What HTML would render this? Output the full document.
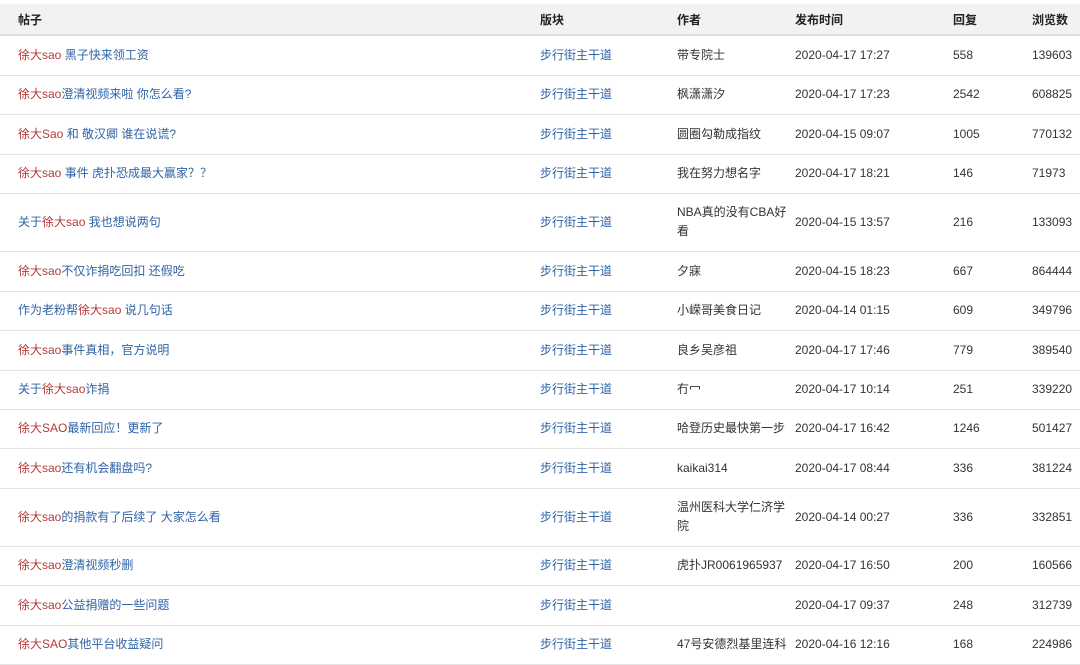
<!DOCTYPE html>
<html><head><meta charset="utf-8"><style>
body{margin:0;background:#fff;width:1080px;height:665px;overflow:hidden;font-family:"Liberation Sans","Noto Sans CJK SC",sans-serif;font-size:12px;color:#333}
table{border-collapse:collapse;position:absolute;top:4px;left:0;width:1080px;table-layout:fixed}
th{background:#f2f2f2;height:30px;text-align:left;font-weight:bold;color:#222;border-bottom:2px solid #ddd;padding:0;vertical-align:middle}
td{padding:0;border-bottom:1px solid #e4e4e4;line-height:19px;vertical-align:middle}
th:first-child,td:first-child{padding-left:18px}
.r{color:#b8383a}.b{color:#2f63a6}
</style></head><body>
<table>
<colgroup><col style="width:540px"><col style="width:137px"><col style="width:118px"><col style="width:158px"><col style="width:79px"><col></colgroup>
<tr><th>帖子</th><th>版块</th><th>作者</th><th>发布时间</th><th>回复</th><th>浏览数</th></tr>
<tr style="height:40px"><td><span class="r">徐大sao</span><span class="b"> 黑子快来领工资</span></td><td class="b">步行街主干道</td><td>带专院士</td><td>2020-04-17 17:27</td><td>558</td><td>139603</td></tr>
<tr style="height:39px"><td><span class="r">徐大sao</span><span class="b">澄清视频来啦 你怎么看?</span></td><td class="b">步行街主干道</td><td>枫潇潇汐</td><td>2020-04-17 17:23</td><td>2542</td><td>608825</td></tr>
<tr style="height:40px"><td><span class="r">徐大Sao</span><span class="b"> 和 敬汉卿 谁在说谎?</span></td><td class="b">步行街主干道</td><td>圆圈勾勒成指纹</td><td>2020-04-15 09:07</td><td>1005</td><td>770132</td></tr>
<tr style="height:39px"><td><span class="r">徐大sao</span><span class="b"> 事件 虎扑恐成最大赢家？？</span></td><td class="b">步行街主干道</td><td>我在努力想名字</td><td>2020-04-17 18:21</td><td>146</td><td>71973</td></tr>
<tr style="height:58px"><td><span class="b">关于</span><span class="r">徐大sao</span><span class="b"> 我也想说两句</span></td><td class="b">步行街主干道</td><td>NBA真的没有CBA好看</td><td>2020-04-15 13:57</td><td>216</td><td>133093</td></tr>
<tr style="height:40px"><td><span class="r">徐大sao</span><span class="b">不仅诈捐吃回扣 还假吃</span></td><td class="b">步行街主干道</td><td>夕寐</td><td>2020-04-15 18:23</td><td>667</td><td>864444</td></tr>
<tr style="height:39px"><td><span class="b">作为老粉帮</span><span class="r">徐大sao</span><span class="b"> 说几句话</span></td><td class="b">步行街主干道</td><td>小嵘哥美食日记</td><td>2020-04-14 01:15</td><td>609</td><td>349796</td></tr>
<tr style="height:40px"><td><span class="r">徐大sao</span><span class="b">事件真相，官方说明</span></td><td class="b">步行街主干道</td><td>良乡吴彦祖</td><td>2020-04-17 17:46</td><td>779</td><td>389540</td></tr>
<tr style="height:39px"><td><span class="b">关于</span><span class="r">徐大sao</span><span class="b">诈捐</span></td><td class="b">步行街主干道</td><td>冇冖</td><td>2020-04-17 10:14</td><td>251</td><td>339220</td></tr>
<tr style="height:39px"><td><span class="r">徐大SAO</span><span class="b">最新回应！更新了</span></td><td class="b">步行街主干道</td><td>哈登历史最快第一步</td><td>2020-04-17 16:42</td><td>1246</td><td>501427</td></tr>
<tr style="height:40px"><td><span class="r">徐大sao</span><span class="b">还有机会翻盘吗?</span></td><td class="b">步行街主干道</td><td>kaikai314</td><td>2020-04-17 08:44</td><td>336</td><td>381224</td></tr>
<tr style="height:58px"><td><span class="r">徐大sao</span><span class="b">的捐款有了后续了 大家怎么看</span></td><td class="b">步行街主干道</td><td>温州医科大学仁济学院</td><td>2020-04-14 00:27</td><td>336</td><td>332851</td></tr>
<tr style="height:39px"><td><span class="r">徐大sao</span><span class="b">澄清视频秒删</span></td><td class="b">步行街主干道</td><td>虎扑JR0061965937</td><td>2020-04-17 16:50</td><td>200</td><td>160566</td></tr>
<tr style="height:40px"><td><span class="r">徐大sao</span><span class="b">公益捐赠的一些问题</span></td><td class="b">步行街主干道</td><td></td><td>2020-04-17 09:37</td><td>248</td><td>312739</td></tr>
<tr style="height:39px"><td><span class="r">徐大SAO</span><span class="b">其他平台收益疑问</span></td><td class="b">步行街主干道</td><td>47号安德烈基里连科</td><td>2020-04-16 12:16</td><td>168</td><td>224986</td></tr>
</table>
</body></html>
